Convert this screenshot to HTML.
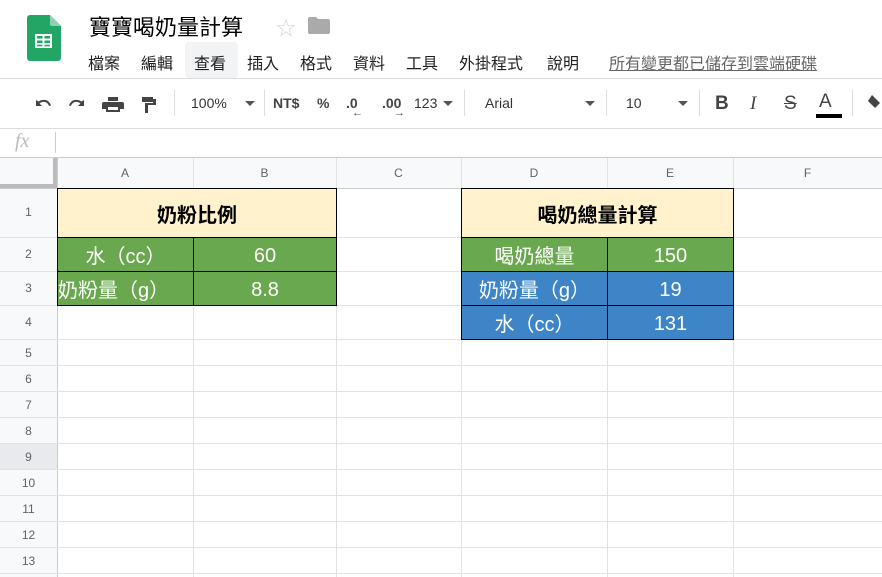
<!DOCTYPE html>
<html><head><meta charset="utf-8"><style>
*{margin:0;padding:0;box-sizing:border-box}
body{width:882px;height:577px;overflow:hidden;background:#fff;font-family:"Liberation Sans","Noto Sans CJK TC",sans-serif;position:relative;color:#202124}
.a{position:absolute}
.menu span{position:absolute;top:50px;font-size:16px;color:#202124}
.tb{position:absolute;top:95px;font-size:14px;color:#444;font-weight:bold}
.vl{position:absolute;background:#e2e2e2;width:1px}
.hl{position:absolute;background:#e2e2e2;height:1px;left:0;width:882px}
.rn{position:absolute;left:0;width:57px;text-align:center;font-size:12px;color:#5f6368}
.cn{position:absolute;top:158px;height:30px;line-height:30px;text-align:center;font-size:12px;color:#5f6368}
.c{position:absolute;display:flex;align-items:center;justify-content:center;font-size:20px;color:#fff;border:1px solid #000}
.n{padding-top:4px}
</style></head><body>
<svg class="a" style="left:27px;top:15px" width="34" height="46" viewBox="0 0 34 46">
<path d="M3 0h20l11 11v32a3 3 0 0 1-3 3H3a3 3 0 0 1-3-3V3a3 3 0 0 1 3-3z" fill="#23a566"/>
<path d="M23 0l11 11H25a2 2 0 0 1-2-2z" fill="#8ed1b1"/>
<rect x="8" y="19" width="17" height="14" fill="#fff"/>
<rect x="10" y="21" width="5.5" height="2.6" fill="#23a566"/><rect x="17.5" y="21" width="5.5" height="2.6" fill="#23a566"/>
<rect x="10" y="25.5" width="5.5" height="2.6" fill="#23a566"/><rect x="17.5" y="25.5" width="5.5" height="2.6" fill="#23a566"/>
<rect x="10" y="29.7" width="5.5" height="1.6" fill="#23a566"/><rect x="17.5" y="29.7" width="5.5" height="1.6" fill="#23a566"/>
</svg>
<div class="a" style="left:89px;top:10px;font-size:22px;color:#000">寶寶喝奶量計算</div>
<div class="a" style="left:276px;top:12px;font-size:20px;color:#d6d6d6">☆</div>
<svg class="a" style="left:308px;top:17px" width="22" height="17"><path d="M0 2a2 2 0 0 1 2-2h6l2 2h10a2 2 0 0 1 2 2v11a2 2 0 0 1-2 2H2a2 2 0 0 1-2-2z" fill="#aaa"/></svg>
<div class="a" style="left:185px;top:42px;width:53px;height:36px;background:#f1f3f4;border-radius:4px"></div>
<div class="menu">
<span style="left:88px">檔案</span><span style="left:141px">編輯</span><span style="left:194px">查看</span><span style="left:247px">插入</span><span style="left:300px">格式</span><span style="left:353px">資料</span><span style="left:406px">工具</span><span style="left:459px">外掛程式</span><span style="left:547px">說明</span>
<span style="left:609px;color:#666;text-decoration:underline">所有變更都已儲存到雲端硬碟</span>
</div>
<div class="a" style="left:0;top:78px;width:882px;height:1px;background:#ddd"></div>
<svg class="a" style="left:33px;top:95px" width="140" height="18" fill="#444">
<path d="M3 5v6h6L6.5 8.5C8 7 10 6.5 12 7c2 .5 3.5 2 4 4l2-.5C17 7.5 15 5.5 12.5 5 10 4.5 7.5 5 5.5 6.5z"/>
<path transform="translate(34 0) scale(-1 1) translate(-20 0)" d="M3 5v6h6L6.5 8.5C8 7 10 6.5 12 7c2 .5 3.5 2 4 4l2-.5C17 7.5 15 5.5 12.5 5 10 4.5 7.5 5 5.5 6.5z"/>
<path d="M75 2h10v4h-10zM71 7h18a2 2 0 0 1 2 2v5h-4v3h-14v-3h-4v-5a2 2 0 0 1 2-2zM75 12v3h10v-3z"/>
<path d="M109 2h11v5h-11zM120 4h3v6h-8v8h-3v-10h8z"/>
</svg>
<div class="a" style="left:174px;top:90px;width:1px;height:26px;background:#ddd"></div>
<div class="tb" style="left:191px;font-weight:normal;color:#333">100%</div>
<div class="a" style="left:245px;top:101px;border:5px solid transparent;border-top-color:#555"></div>
<div class="a" style="left:264px;top:90px;width:1px;height:26px;background:#ddd"></div>
<div class="tb" style="left:273px">NT$</div>
<div class="tb" style="left:317px">%</div>
<div class="tb" style="left:346px">.0</div><div class="a" style="left:352px;top:107px;font-size:11px;color:#444">←</div>
<div class="tb" style="left:382px">.00</div><div class="a" style="left:394px;top:107px;font-size:11px;color:#444">→</div>
<div class="tb" style="left:414px;font-weight:normal;color:#333">123</div>
<div class="a" style="left:443px;top:101px;border:5px solid transparent;border-top-color:#555"></div>
<div class="a" style="left:464px;top:90px;width:1px;height:26px;background:#ddd"></div>
<div class="tb" style="left:485px;font-weight:normal;color:#333">Arial</div>
<div class="a" style="left:585px;top:101px;border:5px solid transparent;border-top-color:#555"></div>
<div class="a" style="left:606px;top:90px;width:1px;height:26px;background:#ddd"></div>
<div class="tb" style="left:626px;font-weight:normal;color:#333">10</div>
<div class="a" style="left:678px;top:101px;border:5px solid transparent;border-top-color:#555"></div>
<div class="a" style="left:699px;top:90px;width:1px;height:26px;background:#ddd"></div>
<div class="a" style="left:715px;top:93px;font-size:19px;font-weight:bold;color:#444">B</div>
<div class="a" style="left:750px;top:93px;font-size:19px;font-style:italic;color:#444;font-family:'Liberation Serif',serif">I</div>
<div class="a" style="left:784px;top:93px;font-size:19px;color:#444;text-decoration:line-through">S</div>
<div class="a" style="left:819px;top:91px;font-size:19px;color:#444">A</div>
<div class="a" style="left:816px;top:114px;width:26px;height:4px;background:#000"></div>
<div class="a" style="left:852px;top:90px;width:1px;height:26px;background:#ddd"></div>
<svg class="a" style="left:866px;top:94px" width="16" height="16"><path d="M6 1l8 8-5 5-7-7z" fill="#444"/></svg>
<div class="a" style="left:0;top:128px;width:882px;height:1px;background:#ddd"></div>
<div class="a" style="left:15px;top:130px;font-size:20px;color:#bbb;font-style:italic;font-family:'Liberation Serif',serif">fx</div>
<div class="a" style="left:55px;top:132px;width:1px;height:21px;background:#ccc"></div>
<div class="a" style="left:0;top:157px;width:882px;height:1px;background:#ccc"></div>
<div class="a" style="left:0;top:158px;width:882px;height:30px;background:#f8f9fa"></div>
<div class="a" style="left:0;top:188px;width:57px;height:389px;background:#f8f9fa"></div>
<div class="a" style="left:0;top:444px;width:57px;height:26px;background:#e8eaed"></div>
<div class="a" style="left:0;top:158px;width:57px;height:30px;border-right:4px solid #bbb;border-bottom:4px solid #bbb"></div>
<div class="vl" style="left:57px;top:158px;height:419px;background:#ccc"></div>
<div class="vl" style="left:193px;top:158px;height:419px"></div>
<div class="vl" style="left:336px;top:158px;height:419px"></div>
<div class="vl" style="left:461px;top:158px;height:419px"></div>
<div class="vl" style="left:607px;top:158px;height:419px"></div>
<div class="vl" style="left:733px;top:158px;height:419px"></div>
<div class="hl" style="top:188px;background:#ccc"></div>
<div class="hl" style="top:237px"></div><div class="hl" style="top:271px"></div><div class="hl" style="top:305px"></div><div class="hl" style="top:339px"></div><div class="hl" style="top:365px"></div><div class="hl" style="top:391px"></div><div class="hl" style="top:417px"></div><div class="hl" style="top:443px"></div><div class="hl" style="top:469px"></div><div class="hl" style="top:495px"></div><div class="hl" style="top:521px"></div><div class="hl" style="top:547px"></div><div class="hl" style="top:573px"></div>
<div class="cn" style="left:57px;width:136px">A</div><div class="cn" style="left:193px;width:143px">B</div><div class="cn" style="left:336px;width:125px">C</div><div class="cn" style="left:461px;width:146px">D</div><div class="cn" style="left:607px;width:126px">E</div><div class="cn" style="left:733px;width:149px">F</div>
<div class="rn" style="top:205px">1</div><div class="rn" style="top:247px">2</div><div class="rn" style="top:281px">3</div><div class="rn" style="top:315px">4</div><div class="rn" style="top:346px">5</div><div class="rn" style="top:372px">6</div><div class="rn" style="top:398px">7</div><div class="rn" style="top:424px">8</div><div class="rn" style="top:450px">9</div><div class="rn" style="top:476px">10</div><div class="rn" style="top:502px">11</div><div class="rn" style="top:528px">12</div><div class="rn" style="top:554px">13</div>
<div class="c" style="left:57px;top:188px;width:280px;height:50px;background:#fff2cc;color:#000;font-weight:bold">奶粉比例</div>
<div class="c" style="left:57px;top:237px;width:137px;height:35px;background:#6aa84f">水（cc）</div>
<div class="c n" style="left:193px;top:237px;width:144px;height:35px;background:#6aa84f">60</div>
<div class="c" style="left:57px;top:271px;width:137px;height:35px;background:#6aa84f;justify-content:flex-start">奶粉量（g）</div>
<div class="c n" style="left:193px;top:271px;width:144px;height:35px;background:#6aa84f">8.8</div>
<div class="c" style="left:461px;top:188px;width:273px;height:50px;background:#fff2cc;color:#000;font-weight:bold">喝奶總量計算</div>
<div class="c" style="left:461px;top:237px;width:147px;height:35px;background:#6aa84f">喝奶總量</div>
<div class="c n" style="left:607px;top:237px;width:127px;height:35px;background:#6aa84f">150</div>
<div class="c" style="left:461px;top:271px;width:147px;height:35px;background:#3d85c6">奶粉量（g）</div>
<div class="c n" style="left:607px;top:271px;width:127px;height:35px;background:#3d85c6">19</div>
<div class="c" style="left:461px;top:305px;width:147px;height:35px;background:#3d85c6">水（cc）</div>
<div class="c n" style="left:607px;top:305px;width:127px;height:35px;background:#3d85c6">131</div>
</body></html>
